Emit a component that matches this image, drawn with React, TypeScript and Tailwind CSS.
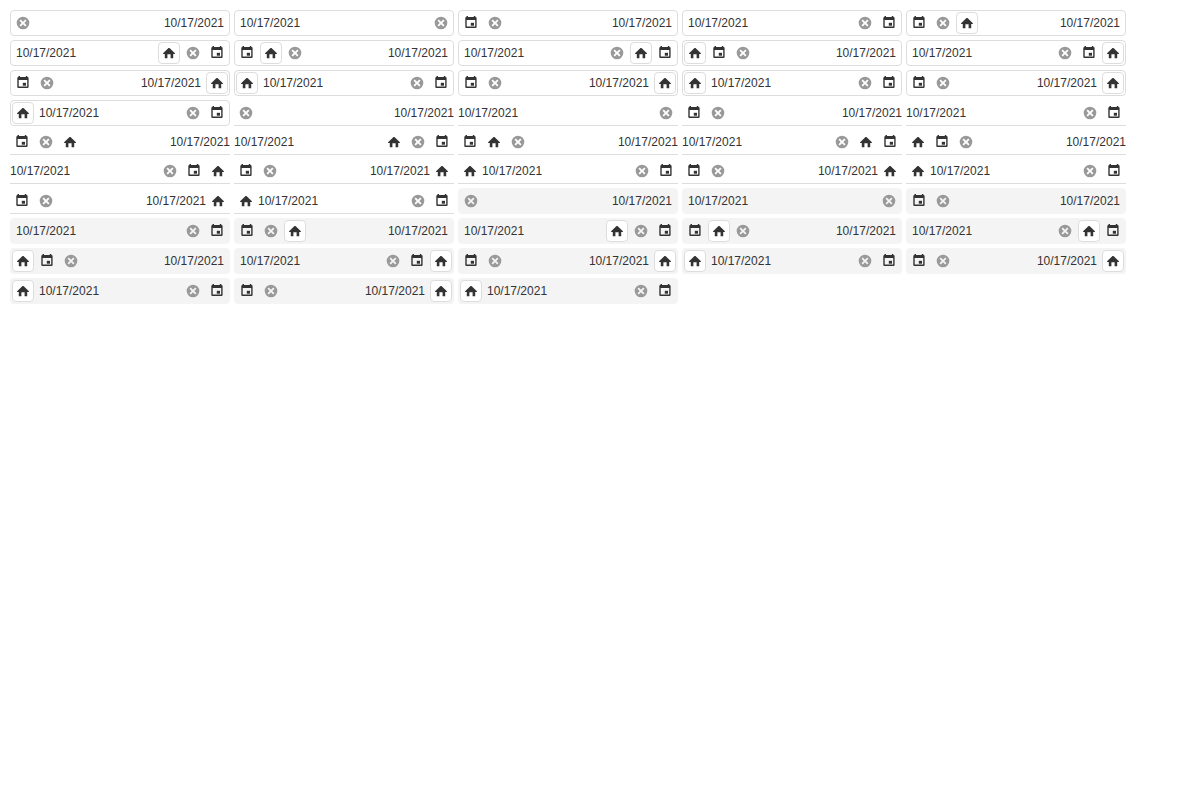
import clsx from 'clsx';

type Variant = 'outlined' | 'underlined' | 'filled';
type Direction = 'rtl' | 'ltr';
type ActionName = 'clear' | 'calendar' | 'home';

interface Layout {
  before: ActionName[];
  after: ActionName[];
}

const variants: Variant[] = ['outlined', 'underlined', 'filled'];
const directions: Direction[] = ['rtl', 'ltr'];

const layouts: Layout[] = [
  { before: [], after: ['clear'] },
  { before: [], after: ['clear', 'calendar'] },
  { before: [], after: ['home', 'clear', 'calendar'] },
  { before: [], after: ['clear', 'home', 'calendar'] },
  { before: [], after: ['clear', 'calendar', 'home'] },
  { before: ['home'], after: ['clear', 'calendar'] },
  { before: ['home'], after: ['clear', 'calendar'] },
  { before: ['home'], after: ['clear', 'calendar'] },
];

function ClearIcon() {
  return (
    <svg className="size-3.5 text-[#999]" viewBox="0 0 14 14" fill="currentColor" fillRule="evenodd" aria-hidden="true">
      <path d="M7 0.7a6.3 6.3 0 1 0 0 12.6a6.3 6.3 0 1 0 0-12.6zM7 5.7l2.2-2.2l1.3 1.3l-2.2 2.2l2.2 2.2l-1.3 1.3l-2.2-2.2l-2.2 2.2l-1.3-1.3l2.2-2.2l-2.2-2.2l1.3-1.3z" />
    </svg>
  );
}

function CalendarIcon() {
  return (
    <svg className="size-3.5" viewBox="0 0 14 14" fill="currentColor" fillRule="evenodd" aria-hidden="true">
      <path d="M2.5 0.1h1.5v1h5.8v-1h1.5v1h0.2a1.1 1.1 0 0 1 1.1 1.1v8.7a1.1 1.1 0 0 1-1.1 1.1H2.4a1.1 1.1 0 0 1-1.1-1.1V2.2a1.1 1.1 0 0 1 1.1-1.1h0.1zM2.7 4.1v6.5h8.5V4.1z" />
      <path d="M6.8 6.8h3.2v2.9H6.8z" />
    </svg>
  );
}

function HomeIcon() {
  return (
    <svg className="size-3.5" viewBox="0 0 14 14" fill="currentColor" aria-hidden="true">
      <path d="M6.5 2.1Q7 1.7 7.5 2.1L12.9 7.2V7.9H11.2V12.2H8.6V8.3H5.4V12.2H2.8V7.9H1.1V7.2z" />
    </svg>
  );
}

const icons = { clear: ClearIcon, calendar: CalendarIcon, home: HomeIcon };
const labels = { clear: 'Clear', calendar: 'Select date', home: 'Home' };

function ActionButton({ name, variant }: { name: ActionName; variant: Variant }) {
  const Icon = icons[name];
  const framed = name === 'home' && variant !== 'underlined';
  return (
    <button
      type="button"
      aria-label={labels[name]}
      className={clsx(
        'flex shrink-0 items-center justify-center',
        framed ? 'm-px size-[22px] rounded border border-[#ddd] bg-white' : 'size-6',
      )}
    >
      <Icon />
    </button>
  );
}

function DateBox({ variant, direction, layout }: { variant: Variant; direction: Direction; layout: Layout }) {
  return (
    <div
      dir={direction}
      className={clsx(
        'flex w-[220px] items-center',
        variant === 'outlined' && 'rounded border border-[#ddd] bg-white',
        variant === 'underlined' && 'border-b border-[#ddd]',
        variant === 'filled' && 'rounded border border-transparent bg-[#f4f4f4]',
      )}
    >
      {layout.before.map((name) => (
        <ActionButton key={name} name={name} variant={variant} />
      ))}
      <input
        type="text"
        aria-label="Date"
        defaultValue="10/17/2021"
        className={clsx(
          'h-6 min-w-0 flex-1 bg-transparent text-xs text-[#333] outline-none',
          variant === 'underlined' ? 'px-0' : layout.before.length > 0 ? 'px-1' : 'px-[5px]',
        )}
      />
      {layout.after.map((name) => (
        <ActionButton key={name} name={name} variant={variant} />
      ))}
    </div>
  );
}

export default function App() {
  return (
    <main className="flex flex-wrap items-end gap-1 p-2.5 font-['Liberation_Sans',Arial,sans-serif] text-xs text-[#333]">
      {variants.flatMap((variant) =>
        layouts.flatMap((layout, index) =>
          directions.map((direction) => (
            <DateBox
              key={`${variant}-${index}-${direction}`}
              variant={variant}
              direction={direction}
              layout={layout}
            />
          )),
        ),
      )}
    </main>
  );
}
